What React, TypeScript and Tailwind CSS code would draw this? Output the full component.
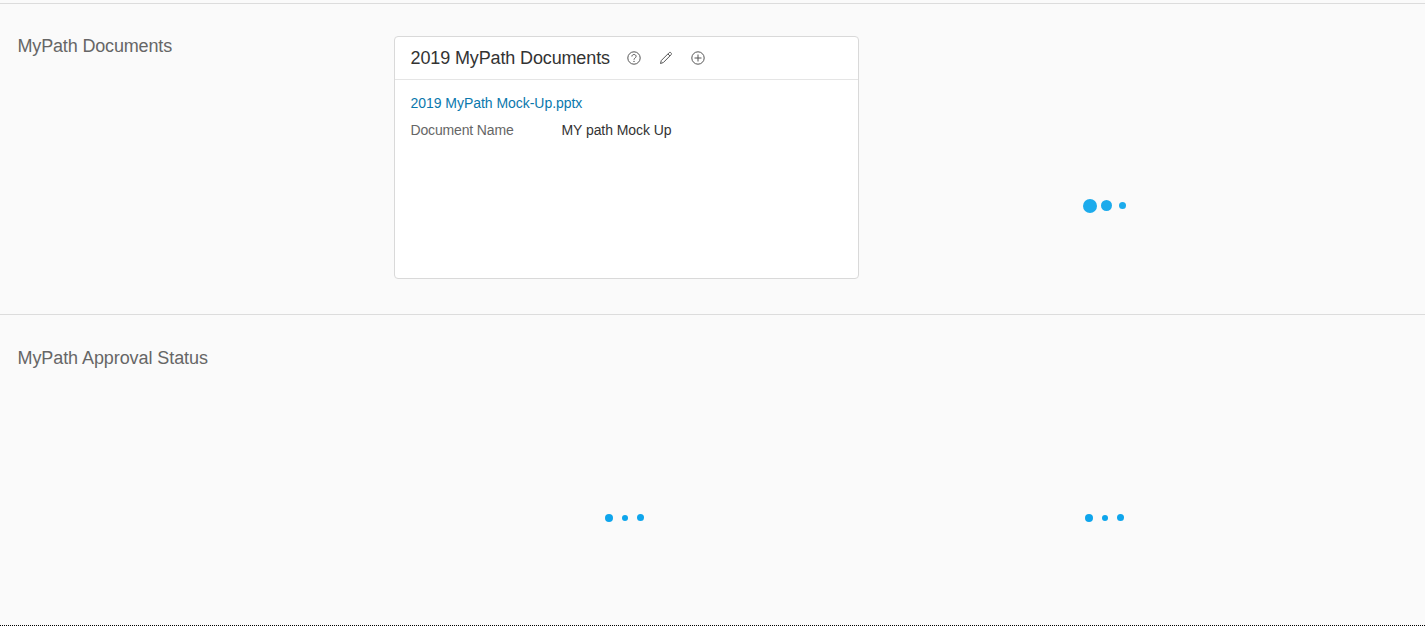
const font = "font-['Liberation_Sans',Arial,sans-serif]";

function Dots() {
  return (
    <div className="flex items-center gap-[9px]">
      <span className="h-[8px] w-[8px] rounded-full bg-[#0ea5ec]" />
      <span className="h-[6px] w-[6px] rounded-full bg-[#0ea5ec]" />
      <span className="h-[7px] w-[7px] rounded-full bg-[#0ea5ec]" />
    </div>
  );
}

export default function App() {
  return (
    <div className={`${font} h-[626px] w-[1425px] overflow-hidden bg-[#fafafa]`}>
      <div className="h-[3px]" />
      <div className="h-px bg-[#dcdcdc]" />
      <section className="flex h-[311px] border-b border-[#dcdcdc]">
        <h2 className="w-[394px] shrink-0 pl-[17.500px] pt-[31px] text-[18px] leading-[22px] font-normal tracking-[-0.16px] text-[#666666]">MyPath Documents</h2>
        <div className="mt-[32px] h-[243px] w-[465px] shrink-0 rounded-[4px] border border-[#d9d9d9] bg-white">
          <div className="flex h-[43px] items-center border-b border-[#e5e5e5] pl-[15.500px]">
            <span className="text-[18px] tracking-[-0.13px] text-[#333333]">2019 MyPath Documents</span>
            <div className="ml-[17px] flex items-center gap-[18px] text-[#555555]">
              <svg width="14" height="14" viewBox="0 0 14 14" fill="none" stroke="currentColor" strokeWidth="1">
                <circle cx="7" cy="7" r="6.2" />
                <path d="M4.9 5.500C4.9 4.200 5.900 3.500 7 3.500s2.100.7 2.100 1.900c0 1.600-2.100 1.600-2.100 3.300" />
                <circle cx="7" cy="10.400" r=".7" fill="currentColor" stroke="none" />
              </svg>
              <svg width="14" height="14" viewBox="0 0 14 14" fill="none" stroke="currentColor" strokeWidth="1">
                <path d="M1.500 12.500l.8-3L10 1.800c.6-.6 1.400-.6 2 0s.6 1.400 0 2L4.400 11.500z" />
                <path d="M9 3l2 2" />
              </svg>
              <svg width="14" height="14" viewBox="0 0 14 14" fill="none" stroke="currentColor" strokeWidth="1">
                <circle cx="7" cy="7" r="6.2" />
                <path d="M7 3.500v7M3.500 7h7" />
              </svg>
            </div>
          </div>
          <div className="pl-[15.500px] pt-[15px] text-[14px] leading-[16px] tracking-[-0.04px]">
            <div className="text-[#0a78ad]">2019 MyPath Mock-Up.pptx</div>
            <div className="mt-[11px] flex">
              <span className="w-[151px] tracking-[-0.15px] text-[#666666]">Document Name</span>
              <span className="tracking-[-0.07px] text-[#333333]">MY path Mock Up</span>
            </div>
          </div>
        </div>
        <div className="flex flex-1 items-center justify-center pt-[93px] pr-[96px] pl-[20px]">
          <div className="flex items-center">
            <span className="h-[14px] w-[14px] rounded-full bg-[#1cabec]" />
            <span className="ml-[4px] h-[11px] w-[11px] rounded-full bg-[#1cabec]" />
            <span className="ml-[7px] h-[7px] w-[7px] rounded-full bg-[#1cabec]" />
          </div>
        </div>
      </section>
      <section className="flex h-[310px]">
        <h2 className="w-[394px] shrink-0 pl-[17.500px] pt-[32px] text-[18px] leading-[22px] font-normal tracking-[-0.08px] text-[#666666]">MyPath Approval Status</h2>
        <div className="flex w-[465px] shrink-0 items-center justify-center pt-[95px] pr-[4px]">
          <Dots />
        </div>
        <div className="flex flex-1 items-center justify-center pt-[95px] pr-[96px] pl-[20px]">
          <Dots />
        </div>
      </section>
      <div className="border-t border-dotted border-black" />
    </div>
  );
}
